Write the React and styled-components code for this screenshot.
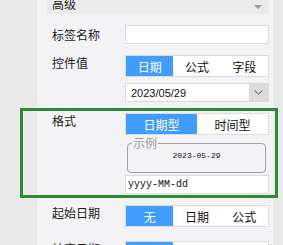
import React from 'react';
import styled, { createGlobalStyle } from 'styled-components';

const GlobalStyle = createGlobalStyle`
  html, body {
    margin: 0;
    padding: 0;
    background: #e9e9e9;
    overflow: hidden;
  }
  body {
    font-family: "Noto Sans CJK SC", "Liberation Sans", sans-serif;
    font-size: 12px;
    color: #1b1b1b;
  }
`;

const Page = styled.div`
  min-height: 100vh;
  padding: 0 10px 0 37px;
  background: #e9e9e9;
`;

const Panel = styled.div`
  min-height: 100vh;
  background: #f3f3f5;
  padding: 0 4px 0 10px;
  display: flex;
  flex-direction: column;
`;

const SectionHeader = styled.div`
  margin-top: -6px;
  height: 20px;
  background: #ebebeb;
  display: flex;
  align-items: center;
  justify-content: space-between;
  padding: 0 7px 0 5px;
  line-height: 14px;
`;

const Caret = styled.span`
  width: 0;
  height: 0;
  margin-top: 6px;
  border-left: 4px solid transparent;
  border-right: 4px solid transparent;
  border-top: 4px solid #9b9b9b;
`;

const Row = styled.div`
  position: relative;
  display: flex;
  align-items: ${p => (p.$center ? 'center' : 'flex-start')};
  margin-top: ${p => p.$gap || 11}px;

  ${p => p.$highlight && `
    &::after {
      content: '';
      position: absolute;
      left: -27px;
      right: -9px;
      top: -5px;
      bottom: -4px;
      border: 3px solid #2e8a35;
      pointer-events: none;
    }
  `}
`;

const Label = styled.div`
  width: 73px;
  padding-left: 5px;
  flex: none;
  line-height: 15px;
`;

const Field = styled.div`
  flex: 1;
  display: flex;
  flex-direction: column;
  gap: ${p => p.$gap || 0}px;
`;

const TextInput = styled.div`
  height: 19px;
  box-sizing: border-box;
  background: #fff;
  border: 1px solid #dadadd;
  display: flex;
  align-items: center;
  padding-left: 2px;
  font-family: ${p => (p.$mono ? '"Liberation Mono", monospace' : 'inherit')};
  font-size: ${p => (p.$mono ? '10px' : '12px')};
  color: #111;
`;

const Segmented = styled.div`
  display: flex;
  height: 22px;
  box-sizing: border-box;
  border: 1px solid #dcdce0;
  background: #fff;
`;

const Segment = styled.div`
  flex: 1;
  display: flex;
  align-items: center;
  justify-content: center;
  background: ${p => (p.$active ? '#419dfd' : '#fff')};
  color: ${p => (p.$active ? '#fff' : '#111')};
`;

const Select = styled.div`
  display: flex;
  height: 19px;
  box-sizing: border-box;
  border: 1px solid #dadadd;
  background: #fff;
`;

const SelectValue = styled.div`
  flex: 1;
  display: flex;
  align-items: center;
  padding-left: 5px;
  font-family: "Liberation Sans", sans-serif;
  font-size: 11px;
  color: #111;
`;

const SelectArrow = styled.div`
  width: 19px;
  background: #dcdcdc;
  display: flex;
  align-items: center;
  justify-content: center;
`;

const Sample = styled.fieldset`
  margin: 0 3px 0 2px;
  padding: 0;
  height: 36px;
  box-sizing: border-box;
  border: 1px solid #a3a3a3;
  border-radius: 4px;
  display: flex;
  align-items: center;
  justify-content: center;
`;

const SampleLegend = styled.legend`
  margin-left: 4px;
  padding: 0 1px;
  color: #9c9c9c;
  font-size: 12px;
  line-height: 12px;
`;

const SampleText = styled.div`
  width: 100%;
  text-align: center;
  padding-top: 2px;
  font-family: "Liberation Mono", monospace;
  font-size: 8px;
  color: #111;
`;

function Seg({ items, active = 0 }) {
  return (
    <Segmented>
      {items.map((it, i) => (
        <Segment key={it} $active={i === active}>{it}</Segment>
      ))}
    </Segmented>
  );
}

export default function App() {
  return (
    <>
      <GlobalStyle />
      <Page>
        <Panel>
          <SectionHeader>
            <span>高级</span>
            <Caret />
          </SectionHeader>

          <Row $center>
            <Label>标签名称</Label>
            <Field>
              <TextInput />
            </Field>
          </Row>

          <Row>
            <Label>控件值</Label>
            <Field $gap={6}>
              <Seg items={['日期', '公式', '字段']} />
              <Select>
                <SelectValue>2023/05/29</SelectValue>
                <SelectArrow>
                  <svg width="9" height="5" viewBox="0 0 9 5">
                    <path d="M0.5 0.5 L4.5 4 L8.5 0.5" fill="none" stroke="#555" strokeWidth="1" />
                  </svg>
                </SelectArrow>
              </Select>
            </Field>
          </Row>

          <Row $highlight>
            <Label>格式</Label>
            <Field $gap={2}>
              <Seg items={['日期型', '时间型']} />
              <Sample>
                <SampleLegend>示例</SampleLegend>
                <SampleText>2023-05-29</SampleText>
              </Sample>
              <TextInput $mono>yyyy-MM-dd</TextInput>
            </Field>
          </Row>

          <Row>
            <Label>起始日期</Label>
            <Field>
              <Seg items={['无', '日期', '公式']} />
            </Field>
          </Row>

          <Row $gap={14}>
            <Label>结束日期</Label>
            <Field>
              <Seg items={['无', '日期', '公式']} />
            </Field>
          </Row>
        </Panel>
      </Page>
    </>
  );
}
